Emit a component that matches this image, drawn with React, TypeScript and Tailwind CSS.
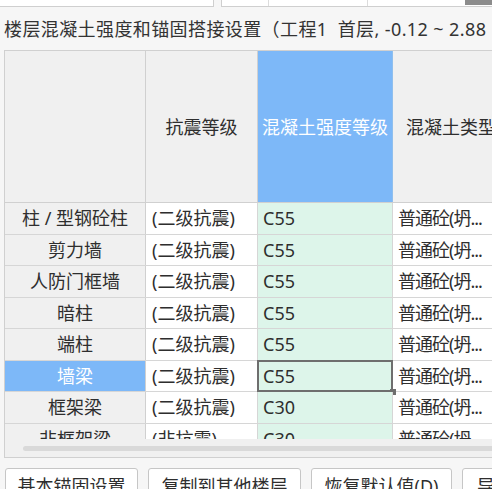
import React from 'react';

const font = { fontFamily: '"Noto Sans", "Noto Sans CJK SC", sans-serif' };

interface Row {
  name: string;
  level: string;
  grade: string;
}

const rows: Row[] = [
  { name: '柱 / 型钢砼柱', level: '(二级抗震)', grade: 'C55' },
  { name: '剪力墙', level: '(二级抗震)', grade: 'C55' },
  { name: '人防门框墙', level: '(二级抗震)', grade: 'C55' },
  { name: '暗柱', level: '(二级抗震)', grade: 'C55' },
  { name: '端柱', level: '(二级抗震)', grade: 'C55' },
  { name: '墙梁', level: '(二级抗震)', grade: 'C55' },
  { name: '框架梁', level: '(二级抗震)', grade: 'C30' },
  { name: '非框架梁', level: '(非抗震)', grade: 'C30' },
];

const SELECTED = 5;

export default function App() {
  return (
    <div className="w-[492px] h-[489px] overflow-hidden bg-[#f6f6f6] text-[#2e2e2e]" style={font}>
      {/* remains of the panel above */}
      <div className="flex h-[7px]">
        <div className="w-[214px] bg-white border-r border-b border-[#cfcfcf]" />
        <div className="ml-[7px] flex-1 flex bg-white border-l border-b border-[#cfcfcf]">
          <div className="w-[47px] border-r border-[#dcdcdc]" />
          <div className="w-[99px] border-r border-[#dcdcdc]" />
          <div className="flex-1" />
          <div className="w-[27px] h-[5px] bg-[#8c8c8c]" />
        </div>
      </div>

      {/* title */}
      <div className="h-[43px] flex items-center pl-[4px] whitespace-nowrap overflow-hidden text-[18px] leading-[22px] tracking-[0.4px] text-[#333]">
        楼层混凝土强度和锚固搭接设置（工程1&nbsp;&nbsp;首层, -0.12 ~ 2.88 m）
      </div>

      {/* grid */}
      <div className="ml-[4px] w-[540px] border border-[#d0d0d0] bg-white text-[18px] leading-[22px]">
        <div className="flex h-[152px] border-b border-[#d0d0d0]">
          <div className="w-[141px] shrink-0 bg-[#f0f0f0] border-r border-[#d0d0d0]" />
          <div className="w-[112px] shrink-0 bg-[#f0f0f0] border-r border-[#d0d0d0] flex items-center justify-center">
            抗震等级
          </div>
          <div className="w-[135px] shrink-0 bg-[#7db8f8] border-r border-[#8fbfee] flex items-center justify-center text-white whitespace-nowrap">
            混凝土强度等级
          </div>
          <div className="w-[140px] shrink-0 bg-[#f0f0f0] flex items-center pl-[13px] whitespace-nowrap overflow-hidden">
            混凝土类型
          </div>
        </div>

        <div className="h-[236px] overflow-hidden">
          {rows.map((r, i) => {
            const sel = i === SELECTED;
            return (
              <div key={r.name} className="flex h-[31.5px] border-b border-[#d6d6d6]">
                <div
                  className={`w-[141px] shrink-0 border-r border-[#d0d0d0] flex items-center justify-center whitespace-nowrap ${
                    sel ? 'bg-[#7db8f8] text-white' : 'bg-[#f0f0f0]'
                  }`}
                >
                  {r.name}
                </div>
                <div className="w-[112px] shrink-0 border-r border-[#d6d6d6] flex items-center pl-[6px] whitespace-nowrap">
                  {r.level}
                </div>
                <div className="relative w-[135px] shrink-0 bg-[#ddf5ea] border-r border-[#d6d6d6] flex items-center pl-[5px]">
                  {r.grade}
                  {sel && (
                    <>
                      <div className="absolute left-[-1px] top-[-1px] right-[-1px] bottom-[-1px] border-2 border-[#6e6e6e]" />
                      <div className="absolute right-[-4px] bottom-[-4px] w-[6px] h-[6px] bg-[#6e6e6e]" />
                    </>
                  )}
                </div>
                <div className="w-[140px] shrink-0 flex items-center pl-[5px] whitespace-nowrap overflow-hidden tracking-[-1px]">
                  普通砼(坍...
                </div>
              </div>
            );
          })}
        </div>

        {/* horizontal scrollbar */}
        <div className="h-[18px] bg-[#f0f0f0] flex items-center pl-[18px]">
          <div className="h-[5px] flex-1 rounded-full bg-[#d9d9d9]" />
        </div>
      </div>

      {/* buttons */}
      <div className="flex mt-[10px] ml-[5px] gap-[10px] text-[18px] leading-[22px] whitespace-nowrap">
        <button className="w-[133px] h-[32px] shrink-0 bg-white border border-[#c6c6c6] rounded-[3px] pt-[6px] flex justify-center">
          基本锚固设置
        </button>
        <button className="w-[153px] h-[32px] shrink-0 bg-white border border-[#c6c6c6] rounded-[3px] pt-[6px] flex justify-center">
          复制到其他楼层
        </button>
        <button className="w-[141px] h-[32px] shrink-0 bg-white border border-[#c6c6c6] rounded-[3px] pt-[6px] flex justify-center">
          恢复默认值(D)
        </button>
        <button className="w-[120px] h-[32px] shrink-0 bg-white border border-[#c6c6c6] rounded-[3px] pt-[6px] pl-[14px] flex justify-start">
          导入规则
        </button>
      </div>
    </div>
  );
}
